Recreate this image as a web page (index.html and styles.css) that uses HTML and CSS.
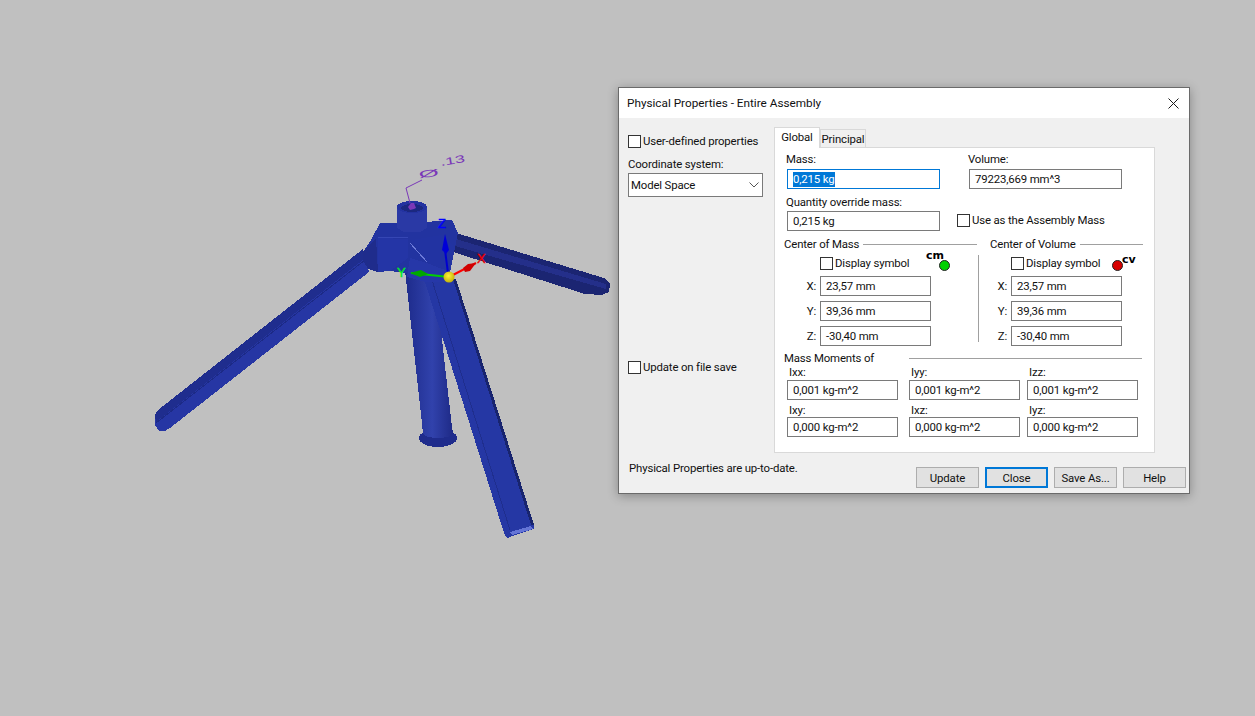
FILE: index.html
```html
<!DOCTYPE html>
<html lang="en">
<head>
    <meta charset="UTF-8">
    <title>Physical Properties - Entire Assembly</title>
    <link rel="stylesheet" href="styles.css">
</head>
<body>
    <svg class="model" width="1255" height="716" viewBox="0 0 1255 716">
        <defs>
            <linearGradient id="tube" x1="408" y1="0" x2="452" y2="0" gradientUnits="userSpaceOnUse">
                <stop offset="0" stop-color="#1f2d8e"/>
                <stop offset="0.55" stop-color="#3142ac"/>
                <stop offset="1" stop-color="#1f2b88"/>
            </linearGradient>
            <radialGradient id="ball" cx="0.45" cy="0.4" r="0.7">
                <stop offset="0" stop-color="#fff23a"/>
                <stop offset="1" stop-color="#b8a800"/>
            </radialGradient>
        </defs>
        <g shape-rendering="crispEdges">
            <!-- left leg -->
            <polygon points="158,410 363,249 369,272 170,428 165,431 159,431 155,425 155,415" fill="#2636a4"/>
            <polygon points="158,410 363,249 364,259 156,422 155,415" fill="#1f2d8e"/>
            <line x1="156" y1="423" x2="365" y2="260" stroke="#1c2a86"/>
            <!-- rear leg -->
            <polygon points="456,233 604,278 610,284 609,292 602,295 585,294 453,252" fill="#1b2572"/>
            <polygon points="456,239 606,284 606,289 455,246" fill="#242f8a"/>
            <!-- centre leg -->
            <ellipse cx="438" cy="438" rx="19" ry="9" fill="#1f2c8c"/>
            <polygon points="405,270 442,270 442,340 452,427 453,433 423,433" fill="url(#tube)"/>
            <ellipse cx="438" cy="433" rx="15" ry="5" fill="url(#tube)"/>
            <!-- front leg -->
            <polygon points="424,279 455,279 534,525 534,529 507,538 504,533" fill="#2537a4"/>
            <polygon points="453,279 456,279 534,525 531,525" fill="#18246e"/>
            <line x1="432" y1="280" x2="510" y2="530" stroke="#1f2e8e"/>
            <polygon points="510,532 531,526 533,529 512,535" fill="#6474d6"/>
            <!-- hub -->
            <polygon points="363,252 371,240 380,223 400,223 425,222 452,220 458,233 455,248 450,272 452,282 426,282 407,277 407,273 390,271 378,272 368,269 363,260" fill="#2233a0"/>
            <polygon points="363,252 376,238 378,272 368,269 363,260" fill="#1f2c8c"/>
            <polygon points="378,238 408,239 408,258 390,271 378,271" fill="#2435a6"/>
            <polygon points="412,240 442,235 455,248 450,272 427,262" fill="#2233a2"/>
            <polygon points="410,258 427,263 450,272 452,282 426,282 407,277" fill="#2637a8"/>
            <line x1="410" y1="243" x2="427" y2="262" stroke="#6c7ad8"/>
            <line x1="378" y1="237" x2="408" y2="238" stroke="#3546b4"/>
            <polygon points="397,207 427,207 427,228 420,232 404,232 397,228" fill="#2a39a5"/>
            <ellipse cx="412" cy="207" rx="15" ry="6" fill="#2332a0"/>
            <ellipse cx="412" cy="208" rx="11" ry="4" fill="#1b2880"/>
        </g>
        <!-- dimension -->
        <polyline class="dim-line" points="422,180 406,188 410,203"/>
        <polygon points="411,203 414,203 416,208 414,209 410,210 408,207" fill="#7a38b8"/>
        <text class="dim-text" transform="translate(419,178) rotate(-5) scale(2,0.8)">Ø</text>
        <text class="dim-text" transform="translate(441,166) rotate(-10) scale(1.4,0.8)">.13</text>
        <!-- triad -->
        <line x1="448" y1="273" x2="445" y2="250" stroke="#0000d0" stroke-width="2"/>
        <polygon points="445,234 449,250 446,254 442,250" fill="#0000d8"/>
        <line x1="449" y1="277" x2="411" y2="273" stroke="#00d000" stroke-width="2"/>
        <polygon points="410,273 421,270 428,274 420,277" fill="#00a800"/>
        <line x1="451" y1="276" x2="476" y2="263" stroke="#ff0000" stroke-width="2"/>
        <polygon points="476,263 470,271 465,272 463,268 468,264" fill="#d00000"/>
        <circle cx="449" cy="277" r="5.5" fill="url(#ball)"/>
        <text class="axis axis-z" x="438" y="228">Z</text>
        <text class="axis axis-y" x="397" y="277">Y</text>
        <text class="axis axis-x" x="477" y="263">X</text>
    </svg>

    <div class="dialog">
        <div class="titlebar">
            <span>Physical Properties - Entire Assembly</span>
            <svg class="close" width="11" height="11" viewBox="0 0 11 11">
                <path d="M0.5 0.5 L10.5 10.5 M10.5 0.5 L0.5 10.5" stroke="#1a1a1a" fill="none"/>
            </svg>
        </div>

        <div class="main">
            <div class="side">
                <label class="check check-user"><i class="box"></i>User-defined properties</label>
                <div class="coord-label">Coordinate system:</div>
                <div class="select">
                    <span>Model Space</span>
                    <svg width="10" height="6" viewBox="0 0 10 6">
                        <path d="M0.5 0.5 L5 5 L9.5 0.5" stroke="#555" fill="none"/>
                    </svg>
                </div>
                <label class="check check-save"><i class="box"></i>Update on file save</label>
            </div>

            <div class="tabs">
                <div class="tab-row">
                    <div class="tab active">Global</div>
                    <div class="tab">Principal</div>
                </div>
                <div class="panel">
                    <div class="row row-top">
                        <div class="field wide">
                            <label>Mass:</label>
                            <div class="input focus"><span class="selected">0,215 kg</span></div>
                        </div>
                        <div class="field wide">
                            <label>Volume:</label>
                            <div class="input">79223,669 mm^3</div>
                        </div>
                    </div>
                    <div class="row row-override">
                        <div class="field wide">
                            <label>Quantity override mass:</label>
                            <div class="input">0,215 kg</div>
                        </div>
                        <label class="check check-assembly"><i class="box"></i>Use as the Assembly Mass</label>
                    </div>

                    <div class="centers">
                        <div class="group group-mass">
                            <div class="heading">Center of Mass<b></b></div>
                            <div class="symbol-row">
                                <label class="check"><i class="box"></i>Display symbol</label>
                                <span class="mark mark-cm">cm</span>
                                <i class="dot dot-green"></i>
                            </div>
                            <div class="coord"><span>X:</span><div class="input">23,57 mm</div></div>
                            <div class="coord"><span>Y:</span><div class="input">39,36 mm</div></div>
                            <div class="coord"><span>Z:</span><div class="input">-30,40 mm</div></div>
                        </div>
                        <div class="divider"></div>
                        <div class="group group-volume">
                            <div class="heading">Center of Volume<b></b></div>
                            <div class="symbol-row">
                                <label class="check"><i class="box"></i>Display symbol</label>
                                <i class="dot dot-red"></i>
                                <span class="mark mark-cv">cv</span>
                            </div>
                            <div class="coord"><span>X:</span><div class="input">23,57 mm</div></div>
                            <div class="coord"><span>Y:</span><div class="input">39,36 mm</div></div>
                            <div class="coord"><span>Z:</span><div class="input">-30,40 mm</div></div>
                        </div>
                    </div>

                    <div class="moments">
                        <div class="heading moments-heading"><span>Mass Moments of</span><b></b></div>
                        <div class="moment-grid">
                            <div class="field"><label>Ixx:</label><div class="input">0,001 kg-m^2</div></div>
                            <div class="field"><label>Iyy:</label><div class="input">0,001 kg-m^2</div></div>
                            <div class="field"><label>Izz:</label><div class="input">0,001 kg-m^2</div></div>
                            <div class="field"><label>Ixy:</label><div class="input">0,000 kg-m^2</div></div>
                            <div class="field"><label>Ixz:</label><div class="input">0,000 kg-m^2</div></div>
                            <div class="field"><label>Iyz:</label><div class="input">0,000 kg-m^2</div></div>
                        </div>
                    </div>
                </div>
            </div>
        </div>

        <div class="footer">
            <div class="status">Physical Properties are up-to-date.</div>
            <div class="buttons">
                <button>Update</button>
                <button class="default">Close</button>
                <button>Save As...</button>
                <button>Help</button>
            </div>
        </div>
    </div>
</body>
</html>
```

FILE: styles.css
```css
* {
    box-sizing: border-box;
}

html, body {
    margin: 0;
    height: 100%;
    overflow: hidden;
}

body {
    background: #c0c0c0;
    position: relative;
    font-family: Roboto, "Noto Sans", sans-serif;
    font-size: 11.4px;
    letter-spacing: -0.15px;
    line-height: 14px;
    color: #111;
}

.model {
    position: absolute;
    left: 0;
    top: 0;
}

.dim-line {
    fill: none;
    stroke: #7a38b8;
}

.dim-text {
    fill: #7a38b8;
    font-family: "Liberation Sans", sans-serif;
    font-size: 13px;
}

.axis {
    font-family: "Liberation Sans", sans-serif;
    font-size: 13px;
    stroke-width: 0.4;
}

.axis-z { fill: #0000ff; stroke: #0000ff; }
.axis-y { fill: #00f020; stroke: #00f020; }
.axis-x { fill: #f00000; stroke: #f00000; }

/* dialog window */
.dialog {
    position: absolute;
    left: 618px;
    top: 87px;
    width: 572px;
    height: 407px;
    background: #f0f0f0;
    border: 1px solid #6a6a6a;
    box-shadow: 0 2px 10px rgba(0, 0, 0, 0.3);
    display: flex;
    flex-direction: column;
}

.titlebar {
    height: 30px;
    background: #fff;
    padding: 0 10px 0 8px;
    font-size: 11.75px;
    letter-spacing: 0;
    display: flex;
    align-items: center;
    justify-content: space-between;
}

.main {
    display: flex;
    gap: 11px;
    height: 335px;
    padding: 9px 0 0 9px;
}

.side {
    width: 135px;
}

.check {
    display: flex;
    align-items: center;
    gap: 2px;
    white-space: nowrap;
}

.box {
    width: 13px;
    height: 13px;
    border: 1px solid #333;
    background: #fff;
    flex: none;
}

.check-user {
    margin-top: 7px;
}

.coord-label {
    margin-top: 9px;
}

.select {
    margin-top: 2px;
    height: 24px;
    border: 1px solid #7a7a7a;
    background: #fff;
    padding: 0 3px 0 2px;
    display: flex;
    align-items: center;
    justify-content: space-between;
}

.check-save {
    margin-top: 163px;
}

.tabs {
    width: 381px;
}

.tab-row {
    display: flex;
    align-items: flex-start;
    height: 20px;
}

.tab {
    width: 46px;
    height: 18px;
    margin-top: 2px;
    border: 1px solid #d9d9d9;
    border-bottom: 0;
    background: #f0f0f0;
    text-align: center;
    line-height: 18px;
}

.tab.active {
    height: 21px;
    margin-top: 0;
    background: #fff;
    position: relative;
    z-index: 1;
}

.panel {
    height: 306px;
    background: #fff;
    border: 1px solid #d9d9d9;
}

.row {
    display: flex;
    margin-left: 12px;
}

.row-top {
    gap: 29px;
    margin-top: 4px;
}

.row-override {
    margin-top: 6px;
    align-items: flex-end;
}

.row-override .field label {
    margin-bottom: 2px;
}

.field label {
    display: block;
    margin-left: -1px;
    margin-bottom: 3px;
}

.field.wide {
    width: 153px;
}

.input {
    height: 20px;
    border: 1px solid #7a7a7a;
    background: #fff;
    padding-left: 5px;
    line-height: 18px;
    white-space: nowrap;
}

.input.focus {
    border-color: #0078d7;
}

.selected {
    display: inline-block;
    background: #0078d7;
    color: #fff;
    line-height: 15px;
    vertical-align: top;
    margin-top: 2px;
}

.check-assembly {
    margin-left: 17px;
    margin-bottom: 4px;
}

.centers {
    display: flex;
    margin: 6px 0 0 9px;
    height: 114px;
}

.group-mass {
    width: 193px;
}

.group-volume {
    width: 153px;
    margin-left: 11px;
}

.divider {
    width: 1px;
    height: 87px;
    margin: 18px 0 0 1px;
    background: #a0a0a0;
}

.heading {
    display: flex;
    align-items: center;
    gap: 4px;
}

.heading b {
    flex: 1;
    height: 1px;
    background: #a0a0a0;
}

.symbol-row {
    display: flex;
    align-items: center;
    height: 14px;
    margin: 5px 0 6px 36px;
    position: relative;
}

.group-volume .symbol-row {
    margin-left: 21px;
}

.mark {
    position: absolute;
    font-family: "DejaVu Sans", sans-serif;
    font-weight: bold;
    font-size: 11px;
    letter-spacing: 0;
    color: #000;
    line-height: 10px;
}

.mark-cm {
    left: 106px;
    top: -5px;
}

.mark-cv {
    left: 111px;
    top: -1px;
}

.dot {
    position: absolute;
    width: 11px;
    height: 11px;
    border-radius: 50%;
    border: 1px solid #222;
    top: 4px;
}

.dot-green {
    left: 119px;
    background: #00d000;
}

.dot-red {
    left: 101px;
    background: #d80000;
}

.coord {
    display: flex;
    justify-content: flex-end;
    align-items: center;
    gap: 4px;
    height: 20px;
    margin-bottom: 5px;
    width: 147px;
}

.group-volume .coord {
    width: 132px;
}

.coord .input {
    width: 111px;
    flex: none;
}

.moments {
    margin-left: 9px;
    width: 358px;
}

.moments-heading {
    gap: 0;
}

.moments-heading span {
    width: 125px;
}

.moment-grid {
    display: grid;
    grid-template-columns: 111px 111px 111px;
    column-gap: 11px;
    row-gap: 3px;
    margin-left: 3px;
}

.moment-grid .field label {
    margin-left: 2px;
    margin-bottom: 1px;
}

.moment-grid .field:nth-child(n+4) label {
    margin-bottom: 0;
}

.moment-grid .field:nth-child(3n) {
    margin-left: -4px;
    margin-right: 4px;
}

.footer {
    flex: 1;
    display: flex;
    justify-content: space-between;
    padding: 0 3px 0 10px;
}

.status {
    margin-top: 8px;
}

.buttons {
    display: flex;
    gap: 6px;
    margin-top: 14px;
}

button {
    width: 63px;
    height: 21px;
    padding: 0;
    background: #e1e1e1;
    border: 1px solid #adadad;
    font: inherit;
    letter-spacing: inherit;
    color: inherit;
}

button.default {
    border: 2px solid #0078d7;
}
```
